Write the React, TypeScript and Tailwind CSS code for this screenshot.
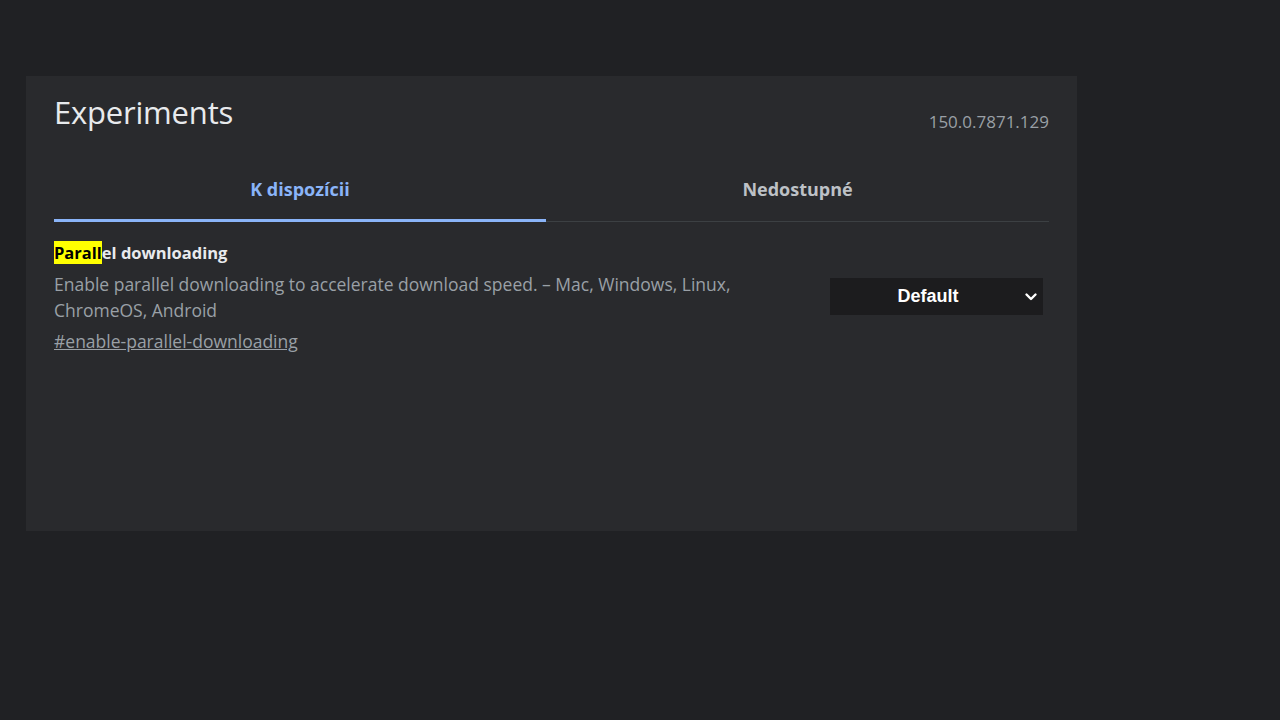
import React from "react";

const tabs = ["K dispozícii", "Nedostupné"];

const Chevron = () => (
  <svg width="14" height="14" viewBox="0 0 14 14" className="text-white">
    <path d="M2.5 4.5l4.5 4.5 4.5-4.5" fill="none" stroke="currentColor" strokeWidth="2.4" strokeLinecap="round" strokeLinejoin="round" />
  </svg>
);

const App: React.FC = () => {
  return (
    <div className="min-h-screen w-full bg-[#202124] pt-[76px] pl-[26px]" style={{ fontFamily: '"Open Sans", "Noto Sans", sans-serif' }}>
      <div className="w-[1051px] h-[455px] bg-[#292a2d] px-[28px] pt-[14px]">
        <div className="flex items-start justify-between">
          <h1 className="text-[31px] leading-[44px] text-[#e8eaed] tracking-[-0.2px]">Experiments</h1>
          <span className="mt-[21px] text-[17px] leading-[22px] text-[#9aa0a6]">150.0.7871.129</span>
        </div>
        <div className="mt-[36px] flex border-b border-[#3c4043] w-[995px]">
          {tabs.map((t, i) => (
            <div
              key={t}
              className={
                "h-[52px] -mb-px pt-[6px] text-center text-[18px] font-bold " +
                (i === 0
                  ? "w-[492px] text-[#8ab4f8] border-b-[3px] border-[#8ab4f8]"
                  : "flex-1 text-[#bdc1c6]")
              }
            >
              {t}
            </div>
          ))}
        </div>
        <div className="mt-[19px] flex items-start justify-between w-[995px]">
          <div className="w-[720px]">
            <div className="text-[16.5px] leading-[24px] font-bold text-[#e8eaed]">
              <span className="bg-[#ffff00] text-black">Parall</span>el downloading
            </div>
            <p className="mt-[6px] text-[17.5px] leading-[26px] text-[#9aa0a6]">
              Enable parallel downloading to accelerate download speed. – Mac, Windows, Linux, ChromeOS, Android
            </p>
            <a href="#enable-parallel-downloading" className="mt-[6px] block text-[17.5px] leading-[24px] text-[#9aa0a6] underline">
              #enable-parallel-downloading
            </a>
          </div>
          <div
            className="mt-[37px] mr-[6px] w-[213px] h-[37px] bg-[#1c1c1e] flex items-center pl-[2px] pr-[5px]"
            style={{ fontFamily: '"Liberation Sans", Arial, sans-serif' }}
          >
            <span className="flex-1 text-center text-[18px] font-bold text-white">Default</span>
            <Chevron />
          </div>
        </div>
      </div>
    </div>
  );
};

export default App;
